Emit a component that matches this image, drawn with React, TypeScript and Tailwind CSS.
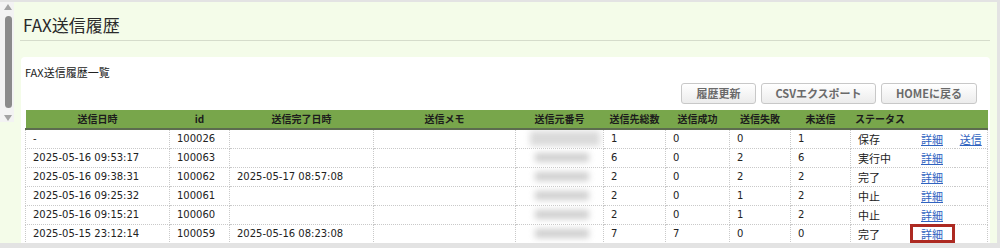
import React from "react";

type Row = {
  sent: string;
  id: string;
  done: string;
  total: number;
  ok: number;
  ng: number;
  yet: number;
  status: string;
  send?: boolean;
  mark?: boolean;
  wideBlur?: boolean;
};

const rows: Row[] = [
  { sent: "-", id: "100026", done: "", total: 1, ok: 0, ng: 0, yet: 1, status: "保存", send: true, wideBlur: true },
  { sent: "2025-05-16 09:53:17", id: "100063", done: "", total: 6, ok: 0, ng: 2, yet: 6, status: "実行中" },
  { sent: "2025-05-16 09:38:31", id: "100062", done: "2025-05-17 08:57:08", total: 2, ok: 0, ng: 2, yet: 2, status: "完了" },
  { sent: "2025-05-16 09:25:32", id: "100061", done: "", total: 2, ok: 0, ng: 1, yet: 2, status: "中止" },
  { sent: "2025-05-16 09:15:21", id: "100060", done: "", total: 2, ok: 0, ng: 1, yet: 2, status: "中止" },
  { sent: "2025-05-15 23:12:14", id: "100059", done: "2025-05-16 08:23:08", total: 7, ok: 7, ng: 0, yet: 0, status: "完了", mark: true },
];

const td = "h-[19px] border-b border-r border-dotted border-[#c9c9c9] pl-[7px] pr-0 py-0 align-middle leading-[14px] whitespace-nowrap overflow-hidden";

export default function App() {
  return (
    <div className="w-[1000px] h-[248px] overflow-hidden bg-[#e3e3e3] pt-[2px] pr-[3px] pb-[5px] font-['Noto_Sans_CJK_JP',sans-serif] text-[#222]">
      <div className="flex h-full bg-[#f4fce9]">
        {/* left scrollbar */}
        <div className="w-[14px] shrink-0 flex flex-col">
          <div className="h-[120px] bg-[#f3f3f3] flex flex-col items-center pt-[2px]">
            <svg width="8" height="6" viewBox="0 0 8 6" className="ml-[2px]">
              <path d="M4 0 L8 6 L0 6 Z" fill="#a3a3a3" />
            </svg>
            <div className="mt-[6px] ml-[2px] w-[7px] h-[92px] rounded-full bg-[#8b8b8b]" />
            <svg width="8" height="6" viewBox="0 0 8 6" className="ml-[2px] mt-[7px]">
              <path d="M0 0 L8 0 L4 6 Z" fill="#a3a3a3" />
            </svg>
          </div>
        </div>

        <div className="flex-1 min-w-0 flex flex-col">
          <div className="h-[38px] pl-[9px] pt-[10px] text-[17px] leading-[25px] text-[#2a2a2a]">FAX送信履歴</div>
          <div className="ml-[6px] mr-[7px] h-px bg-[#d5dccb]" />
          <div className="mt-[16px] ml-[7px] mr-[7px] flex-1 min-h-0 overflow-hidden rounded-t-[4px] bg-white pl-[4px] pr-[3px] pt-[7px]">
            <div className="h-[16px] text-[11px] leading-[16px] text-[#222]">FAX送信履歴一覧</div>
            <div className="mt-[3px] flex justify-end gap-[5px] pr-[10px]">
              <button className="w-[75px] h-[21px] rounded-[3px] border border-[#c8c8c8] bg-linear-to-b from-white to-[#ececec] text-[11px] font-bold text-[#6a6a6a]">履歴更新</button>
              <button className="w-[115px] h-[21px] rounded-[3px] border border-[#c8c8c8] bg-linear-to-b from-white to-[#ececec] text-[11px] font-bold text-[#6a6a6a]">CSVエクスポート</button>
              <button className="w-[96px] h-[21px] rounded-[3px] border border-[#c8c8c8] bg-linear-to-b from-white to-[#ececec] text-[11px] font-bold text-[#6a6a6a]">HOMEに戻る</button>
            </div>
            <table className="mt-[6px] w-[962px] table-fixed border-collapse font-['DejaVu_Sans','Noto_Sans_CJK_JP',sans-serif] text-[10px] text-[#222]">
              <colgroup>
                <col className="w-[144px]" />
                <col className="w-[60px]" />
                <col className="w-[144px]" />
                <col className="w-[142px]" />
                <col className="w-[88px]" />
                <col className="w-[62px]" />
                <col className="w-[64px]" />
                <col className="w-[61px]" />
                <col className="w-[60px]" />
                <col className="w-[59px]" />
                <col className="w-[45px]" />
                <col className="w-[33px]" />
              </colgroup>
              <thead>
                <tr className="bg-[#78a64b] border-b-2 border-[#5c6c4f]">
                  {["送信日時", "id", "送信完了日時", "送信メモ", "送信元番号", "送信先総数", "送信成功", "送信失敗", "未送信", "ステータス", "", ""].map((h, i) => (
                    <th key={i} className="h-[18px] p-0 text-center font-['Noto_Sans_CJK_JP',sans-serif] text-[10px] font-bold leading-[18px] text-[#1c1c1c] whitespace-nowrap">
                      {h}
                    </th>
                  ))}
                </tr>
              </thead>
              <tbody>
                {rows.map((r) => (
                  <tr key={r.id}>
                    <td className={`${td} border-l`}>{r.sent}</td>
                    <td className={td}>{r.id}</td>
                    <td className={td}>{r.done}</td>
                    <td className={td}></td>
                    <td className={`${td} pl-0`}>
                      {r.wideBlur ? (
                        <div className="ml-[7px] w-[70px] h-[15px] bg-[#dadada] blur-[3px]" />
                      ) : (
                        <div className="ml-[12px] w-[54px] h-[9px] bg-[#cfcfcf] blur-[3px]" />
                      )}
                    </td>
                    <td className={td}>{r.total}</td>
                    <td className={td}>{r.ok}</td>
                    <td className={td}>{r.ng}</td>
                    <td className={td}>{r.yet}</td>
                    <td className={`${td} pl-[5px] border-r-0 font-['Noto_Sans_CJK_JP',sans-serif] text-[11px]`}>{r.status}</td>
                    <td className="relative h-[19px] border-b border-dotted border-[#c9c9c9] p-0 text-center align-middle leading-[14px] font-['Noto_Sans_CJK_JP',sans-serif] text-[11px]">
                      <a className="text-[#3063bf] underline underline-offset-1">詳細</a>
                      {r.mark && <div className="absolute left-0 right-0 top-[-1px] bottom-0 border-[3px] border-[#ad2a22]" />}
                    </td>
                    <td className="h-[19px] border-b border-r border-dotted border-[#c9c9c9] p-0 text-center align-middle leading-[14px] font-['Noto_Sans_CJK_JP',sans-serif] text-[11px]">
                      {r.send && <a className="text-[#3063bf] underline underline-offset-1">送信</a>}
                    </td>
                  </tr>
                ))}
              </tbody>
            </table>
          </div>
        </div>
      </div>
    </div>
  );
}
